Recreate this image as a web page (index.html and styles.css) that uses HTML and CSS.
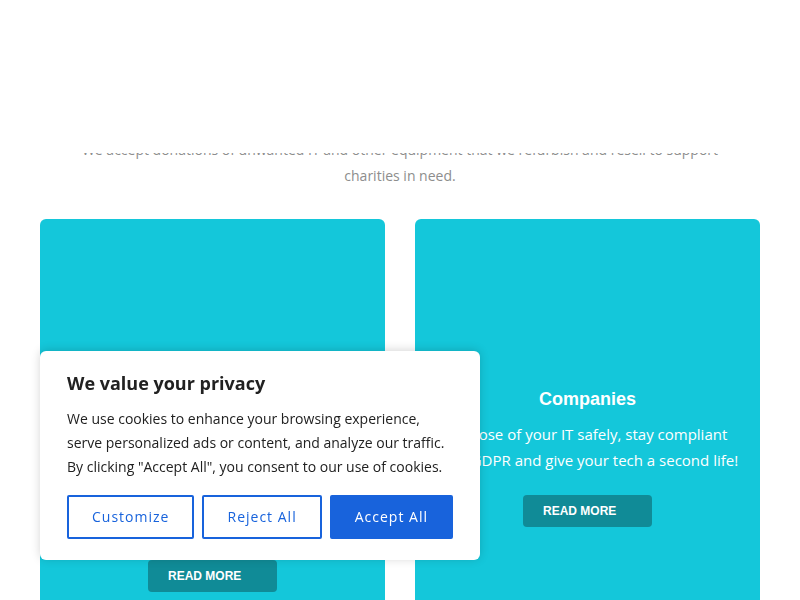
FILE: index.html
```html
<!DOCTYPE html>
<html lang="en">
<head>
  <meta charset="UTF-8" />
  <title>Donate Your IT</title>
  <link rel="stylesheet" href="styles.css">
</head>
<body>

  <!-- Sticky site header (covers scrolled content) -->
  <header class="site-header"></header>

  <section class="intro">
    <p>We accept donations of unwanted IT and other equipment that we refurbish and resell to support charities in need.</p>
  </section>

  <!-- Cards -->
  <section class="cards">
    <div class="card card-left">
      <h3>Individuals</h3>
      <p>Donate your old laptops, phones and tablets. We wipe every device securely and give it a new home, raising money for charities in need across the UK.</p>
      <a href="#" class="read-more">READ MORE</a>
    </div>
    <div class="card">
      <h3>Companies</h3>
      <p>Dispose of your IT safely, stay compliant with GDPR and give your tech a second life!</p>
      <a href="#" class="read-more">READ MORE</a>
    </div>
  </section>

  <!-- Cookie consent -->
  <div class="cookie-box">
    <h4>We value your privacy</h4>
    <p>We use cookies to enhance your browsing experience, serve personalized ads or content, and analyze our traffic. By clicking "Accept All", you consent to our use of cookies.</p>
    <div class="cookie-buttons">
      <button class="btn-outline">Customize</button>
      <button class="btn-outline">Reject All</button>
      <button class="btn-accept">Accept All</button>
    </div>
  </div>

</body>
</html>
```

FILE: styles.css
```css
body {
  font-family: "Open Sans", sans-serif;
  background-color: #ffffff;
  margin: 0;
  padding: 0;
  overflow: hidden;
}

.site-header {
  position: fixed;
  top: 0;
  left: 0;
  right: 0;
  height: 153px;
  background-color: #ffffff;
  z-index: 5;
}

.intro {
  padding-top: 137px;
}

.intro p {
  max-width: 650px;
  margin: 0 auto;
  text-align: center;
  font-size: 14px;
  line-height: 26px;
  color: #8d8d8d;
}

/* Cards */
.cards {
  display: grid;
  grid-template-columns: 1fr 1fr;
  gap: 30px;
  padding: 0 40px;
  margin-top: 30px;
}

.card {
  background-color: #14c7da;
  border-radius: 6px;
  height: 420px;
  padding: 169px 20px 0;
  box-sizing: border-box;
  text-align: center;
  color: #ffffff;
}

.card-left {
  padding-top: 155px;
}

.card h3 {
  font-family: "Liberation Sans", Arial, sans-serif;
  font-size: 18px;
  line-height: 22px;
  font-weight: bold;
  margin: 0 0 11px;
}

.card p {
  font-size: 15px;
  line-height: 26px;
  margin: 0 0 22px;
}

.card-left p {
  margin-bottom: 49px;
}

.read-more {
  display: inline-block;
  width: 129px;
  height: 32px;
  box-sizing: border-box;
  padding: 1px 0 0 20px;
  text-align: left;
  line-height: 31px;
  background-color: #108b97;
  border-radius: 4px;
  color: #ffffff;
  font-family: "Liberation Sans", Arial, sans-serif;
  font-weight: bold;
  font-size: 12px;
  text-decoration: none;
}

/* Cookie banner */
.cookie-box {
  position: fixed;
  left: 40px;
  bottom: 40px;
  width: 440px;
  box-sizing: border-box;
  padding: 20px 27px 21px;
  background-color: #ffffff;
  border-radius: 6px;
  box-shadow: 0 -1px 10px rgba(0, 0, 0, 0.17);
  z-index: 10;
}

.cookie-box h4 {
  margin: 0 0 12px;
  font-size: 18px;
  line-height: 24px;
  font-weight: 700;
  color: #212121;
}

.cookie-box p {
  margin: 0 0 16px;
  font-size: 14px;
  line-height: 24px;
  color: #212121;
}

.cookie-buttons {
  display: flex;
  gap: 8px;
}

.cookie-buttons button {
  flex: auto;
  font-family: inherit;
  font-size: 14px;
  line-height: 24px;
  padding: 8px;
  font-weight: 500;
  letter-spacing: 1px;
  border-radius: 2px;
  border: 2px solid #1863dc;
  cursor: pointer;
}

.btn-outline {
  background-color: #ffffff;
  color: #1863dc;
}

.btn-accept {
  background-color: #1863dc;
  color: #ffffff;
}
```
